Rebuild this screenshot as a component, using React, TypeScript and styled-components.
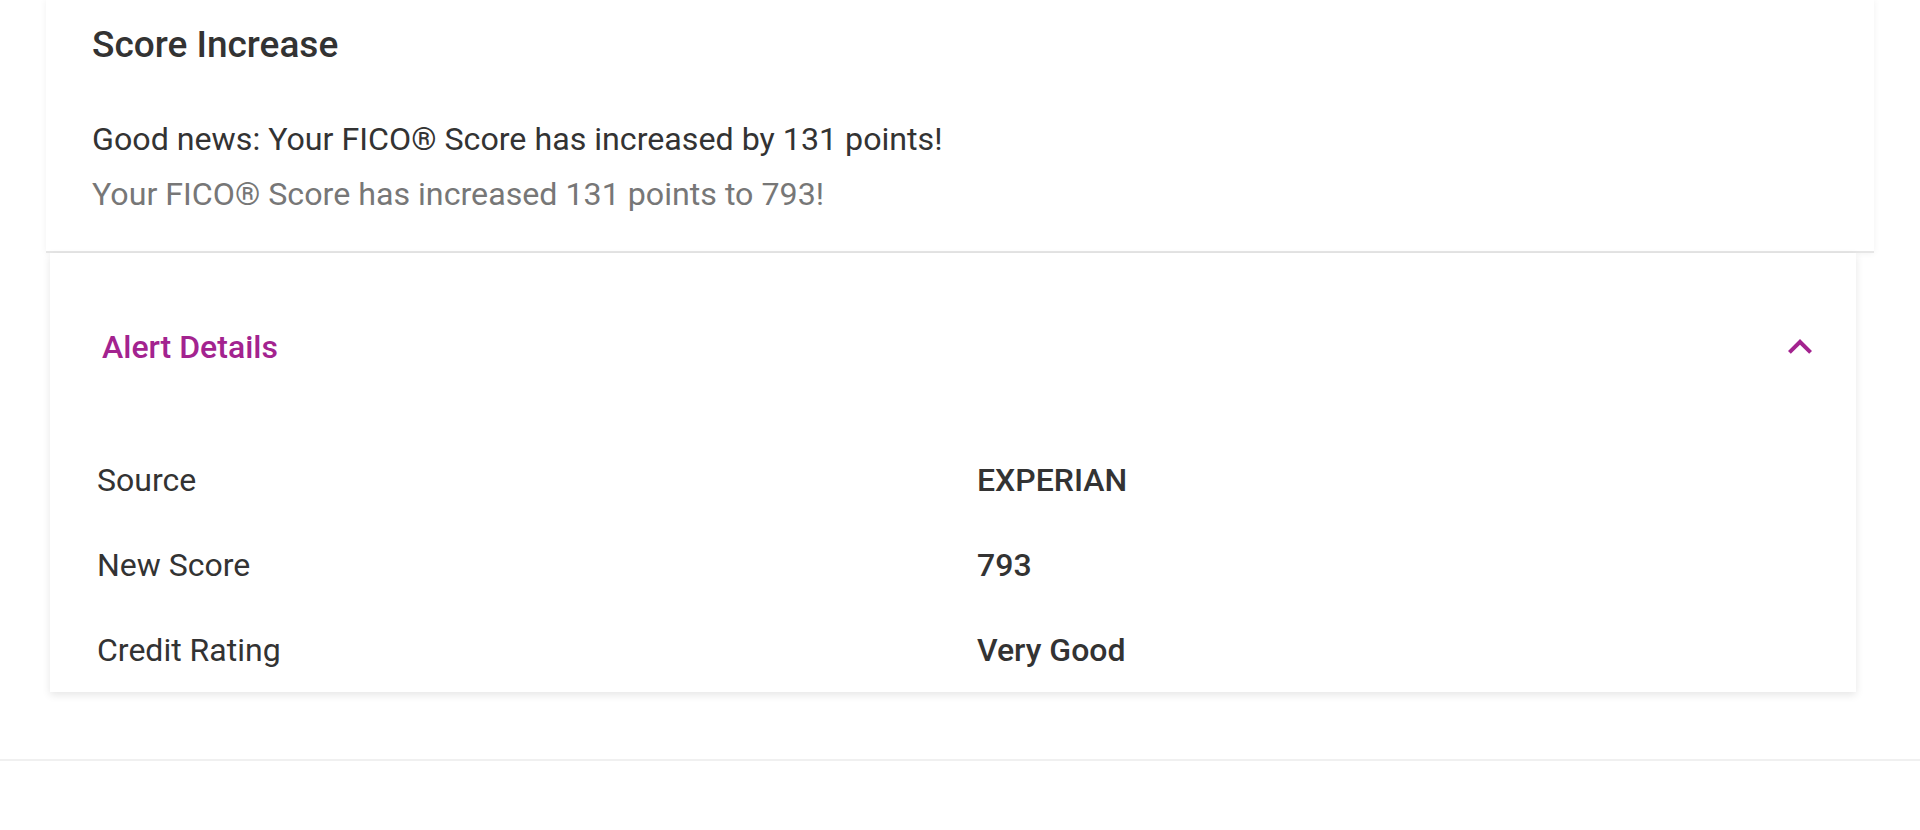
import React, { useState } from 'react';
import styled, { createGlobalStyle } from 'styled-components';

const GlobalStyle = createGlobalStyle`
  body {
    margin: 0;
    background: #ffffff;
    font-family: Roboto, "Noto Sans", Arial, sans-serif;
    color: #333333;
  }
`;

const Page = styled.div`
  width: 1920px;
  min-height: 830px;
  background: #ffffff;
`;

const SummaryCard = styled.section`
  margin: 0 46px;
  padding: 23px 46px 29px;
  background: #ffffff;
  border-bottom: 2px solid #e6e6e6;
  box-shadow: 0 0 7px rgba(0, 0, 0, 0.06);
`;

const Title = styled.h2`
  margin: 0 0 46px;
  font-size: 37px;
  line-height: 43px;
  font-weight: 500;
  color: #333333;
`;

const Message = styled.p<{ $muted?: boolean }>`
  margin: 0;
  font-size: 32.2px;
  line-height: 55px;
  font-weight: 400;
  color: ${(p) => (p.$muted ? '#777777' : '#333333')};
`;

const DetailsCard = styled.section`
  margin: 0 64px 0 50px;
  padding: 70px 0 20px;
  background: #ffffff;
  box-shadow: 0 3px 8px rgba(0, 0, 0, 0.1);
`;

const DetailsHeader = styled.button`
  display: flex;
  align-items: center;
  justify-content: space-between;
  width: 100%;
  padding: 0 32px 0 52px;
  border: 0;
  background: transparent;
  cursor: pointer;
  font-family: inherit;
`;

const DetailsTitle = styled.span`
  font-size: 32px;
  line-height: 44px;
  font-weight: 500;
  color: #a3238f;
`;

const Chevron = styled.svg<{ $open: boolean }>`
  width: 48px;
  height: 48px;
  fill: #a3238f;
  transform: rotate(${(p) => (p.$open ? '0deg' : '180deg')});
`;

const DetailsList = styled.dl`
  display: grid;
  grid-template-columns: 880px 1fr;
  row-gap: 41px;
  margin: 87px 0 0;
  padding: 0 47px;
`;

const Label = styled.dt`
  margin: 0;
  font-size: 32px;
  line-height: 44px;
  font-weight: 400;
  color: #333333;
`;

const Value = styled.dd`
  margin: 0;
  font-size: 32px;
  line-height: 44px;
  font-weight: 500;
  color: #333333;
`;

const Divider = styled.hr`
  margin: 67px 0 0;
  border: 0;
  border-top: 2px solid #f0f0f0;
`;

const details = [
  { label: 'Source', value: 'EXPERIAN' },
  { label: 'New Score', value: '793' },
  { label: 'Credit Rating', value: 'Very Good' },
];

export default function App() {
  const [open, setOpen] = useState(true);

  return (
    <Page>
      <GlobalStyle />
      <SummaryCard>
        <Title>Score Increase</Title>
        <Message>Good news: Your FICO® Score has increased by 131 points!</Message>
        <Message $muted>Your FICO® Score has increased 131 points to 793!</Message>
      </SummaryCard>
      <DetailsCard>
        <DetailsHeader onClick={() => setOpen(!open)}>
          <DetailsTitle>Alert Details</DetailsTitle>
          <Chevron $open={open} viewBox="0 0 24 24">
            <path d="M12 8l-6 6 1.41 1.41L12 10.83l4.59 4.58L18 14z" />
          </Chevron>
        </DetailsHeader>
        {open && (
          <DetailsList>
            {details.map((d) => (
              <React.Fragment key={d.label}>
                <Label>{d.label}</Label>
                <Value>{d.value}</Value>
              </React.Fragment>
            ))}
          </DetailsList>
        )}
      </DetailsCard>
      <Divider />
    </Page>
  );
}
